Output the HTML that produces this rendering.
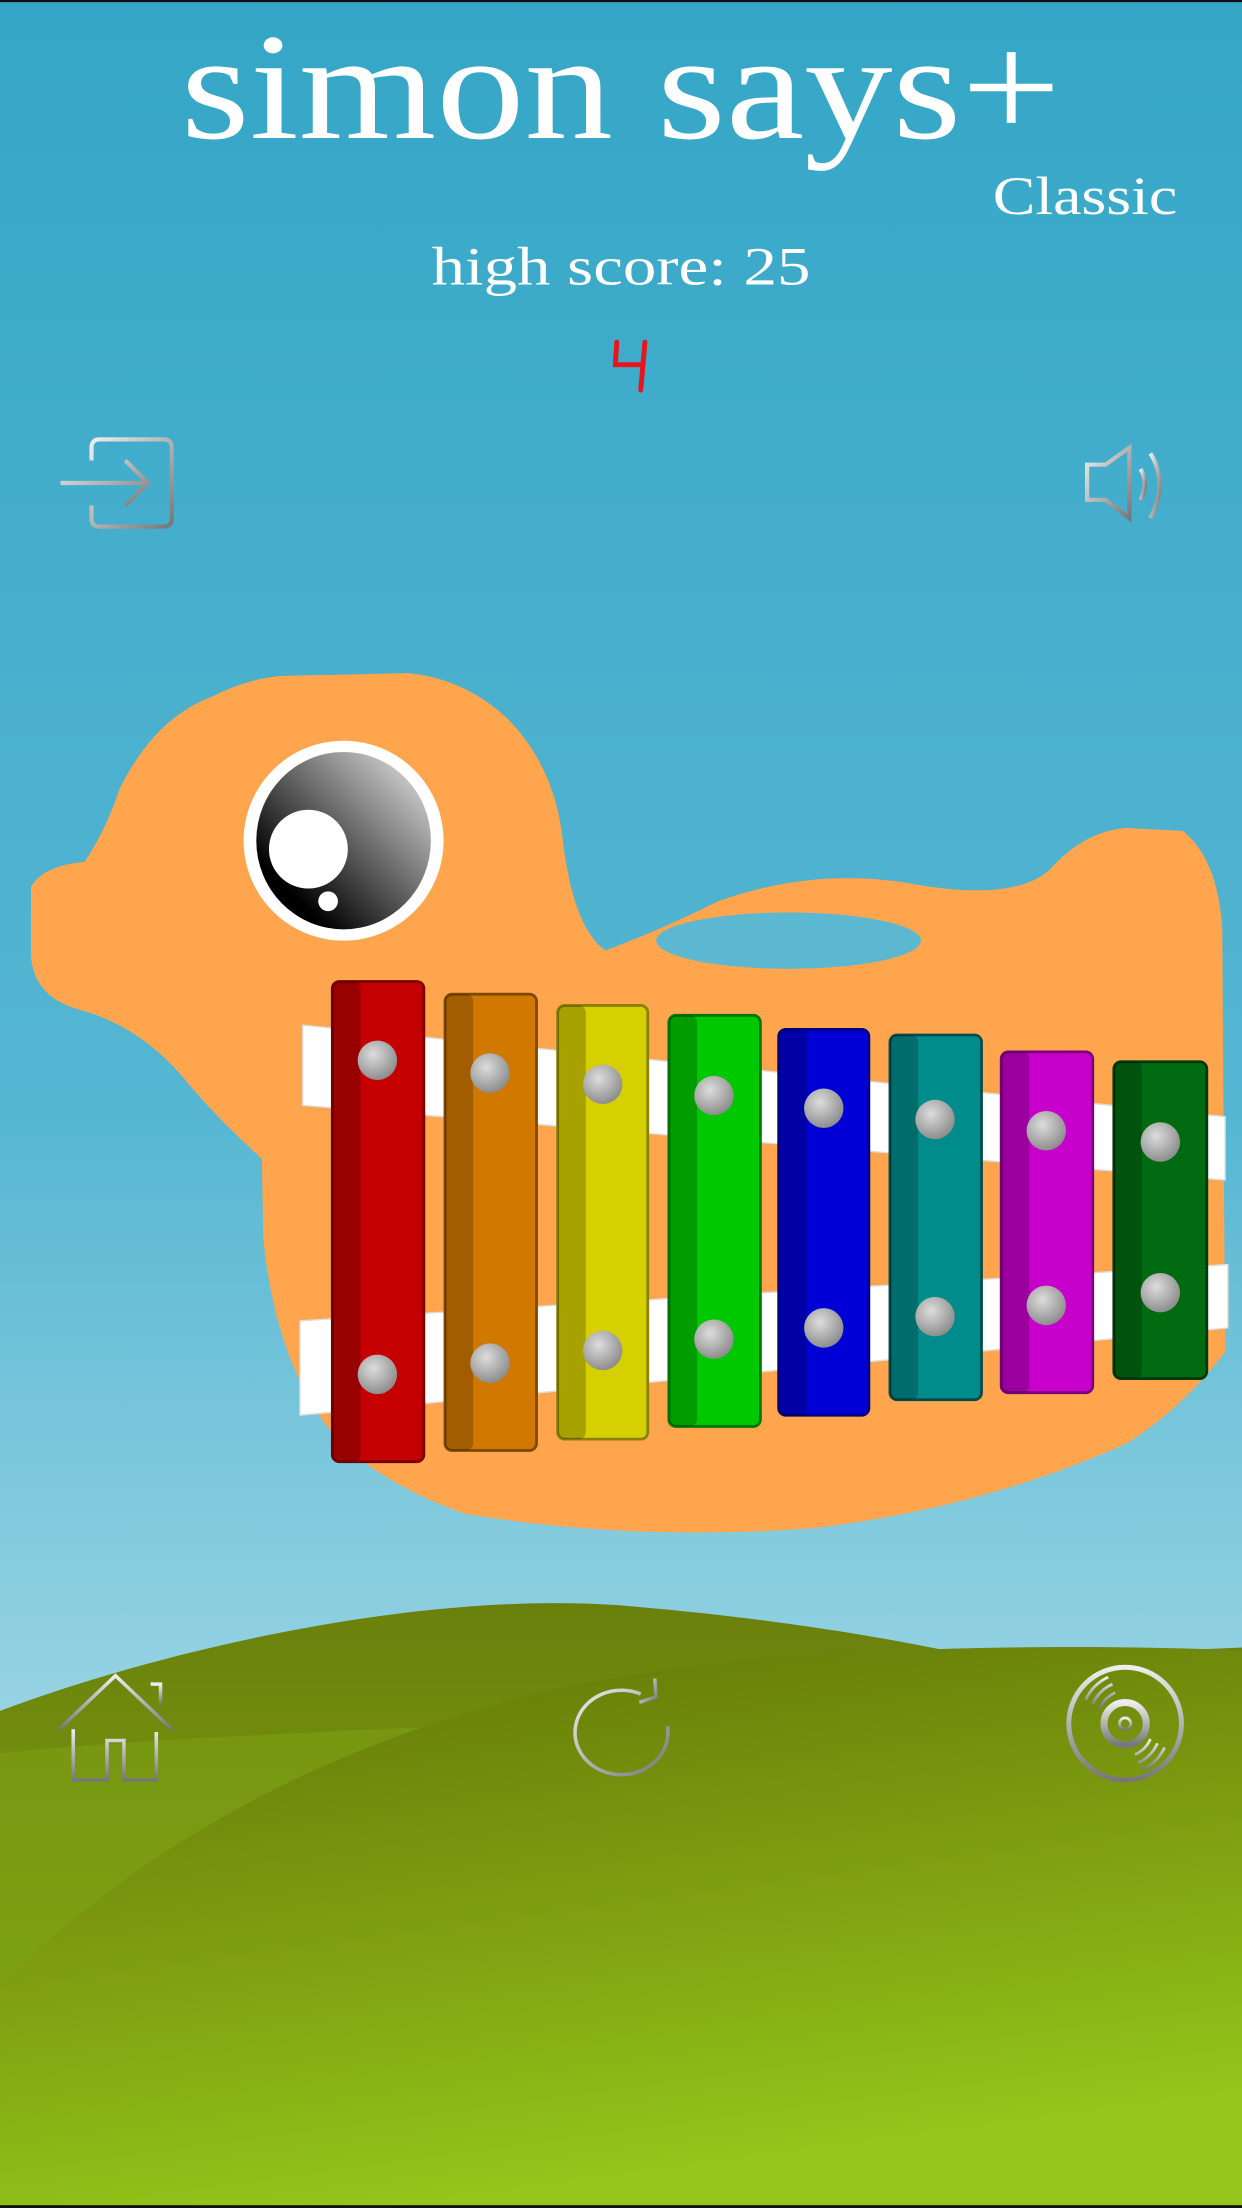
<!DOCTYPE html>
<html><head><meta charset="utf-8"><style>
html,body{margin:0;padding:0;background:#3aa9c9;}
svg{display:block;}
</style></head><body>
<svg width="1242" height="2208" viewBox="0 0 882 1568" xmlns="http://www.w3.org/2000/svg">
<defs>
<linearGradient id="sky" x1="0" y1="0" x2="0" y2="1">
<stop offset="0" stop-color="#35a6c7"/><stop offset="0.5" stop-color="#55b6d2"/><stop offset="0.8" stop-color="#9dd6e5"/>
</linearGradient>
<linearGradient id="grass" x1="0" y1="0" x2="0.3" y2="1">
<stop offset="0" stop-color="#5f7406"/><stop offset="0.5" stop-color="#7c9a10"/><stop offset="1" stop-color="#93c51a"/>
</linearGradient>
<linearGradient id="grass2" x1="0" y1="0" x2="0" y2="1">
<stop offset="0" stop-color="#6a800c"/><stop offset="1" stop-color="#88b018"/>
</linearGradient>
<linearGradient id="eye" x1="0" y1="1" x2="1" y2="0">
<stop offset="0.2" stop-color="#000"/><stop offset="1" stop-color="#eee"/>
</linearGradient>
<linearGradient id="silver" x1="0" y1="0" x2="1" y2="1">
<stop offset="0" stop-color="#eee"/><stop offset="1" stop-color="#777"/>
</linearGradient>
<linearGradient id="silver2" x1="0" y1="0" x2="0" y2="1">
<stop offset="0" stop-color="#eee"/><stop offset="1" stop-color="#777"/>
</linearGradient>
<radialGradient id="knob" cx="0.4" cy="0.35" r="0.7">
<stop offset="0" stop-color="#ddd"/><stop offset="1" stop-color="#888"/>
</radialGradient>
</defs>
<rect width="882" height="1568" fill="url(#sky)"/>
<rect width="882" height="1.5" fill="#111"/>
<path d="M0 1215 C120 1170 300 1130 440 1140 C560 1150 640 1165 700 1178 L882 1170 L882 1568 L0 1568Z" fill="url(#grass2)"/>
<path d="M0 1245 C150 1230 300 1230 480 1215 L882 1300 L882 1568 L0 1568Z" fill="#7ea414" opacity="0.5"/>
<path d="M0 1410 C120 1290 300 1200 520 1180 C650 1168 780 1168 882 1172 L882 1568 L0 1568Z" fill="url(#grass)"/>
<rect y="1566" width="882" height="2" fill="#111"/>
<text x="441" y="98" text-anchor="middle" font-family="Liberation Serif, serif" font-size="108" fill="#fff" textLength="625" lengthAdjust="spacingAndGlyphs">simon says+</text>
<text x="836" y="152" text-anchor="end" font-family="Liberation Serif, serif" font-size="38" fill="#fff" textLength="131" lengthAdjust="spacingAndGlyphs">Classic</text>
<text x="441" y="202" text-anchor="middle" font-family="Liberation Serif, serif" font-size="38" fill="#fff" textLength="269" lengthAdjust="spacingAndGlyphs">high score: 25</text>
<g stroke="#e8141e" stroke-width="3.5" fill="none" stroke-linecap="round">
<path d="M438 243 L437 259 L455 259 M458 243 L455 277"/>
</g>
<g fill="none" stroke="url(#silver)" stroke-width="3">
<path d="M65 327 V318 Q65 312 71 312 H116 Q122 312 122 318 V368 Q122 374 116 374 H71 Q65 374 65 368 V359"/>
<path d="M43 343 H105 M89 327 L105 343 L89 359"/>
</g>
<g fill="none" stroke="url(#silver)" stroke-width="3">
<path d="M772 330 H785 L802 318 V368 L785 355 H772Z"/>
<path d="M810 333 Q816 343 810 355"/>
<path d="M817 322 Q830 343 817 368"/>
</g>
<path d="M200 480 L290 478 Q330 482 360 510 Q395 545 400 600 Q408 660 430 675 Q470 660 510 640 Q580 615 650 628 Q720 640 745 618 Q770 590 800 588 L840 590 Q865 610 868 660 L870 960 Q840 1000 800 1025 Q700 1070 580 1085 Q450 1095 330 1075 Q260 1050 230 1010 Q195 960 187 880 L186 823 Q150 790 130 765 Q100 730 60 718 Q25 710 22 680 L22 630 Q30 615 60 612 Q75 590 85 560 Q110 510 150 495 Q175 482 200 480Z" fill="#ffa54d"/>
<ellipse cx="560" cy="668" rx="94" ry="20" fill="#5cb8d0"/>
<circle cx="244" cy="597" r="71" fill="#fff"/>
<ellipse cx="244" cy="597" rx="62" ry="63" fill="url(#eye)"/>
<circle cx="219" cy="603" r="28" fill="#fff"/>
<circle cx="233" cy="640" r="7" fill="#fff"/>
<path d="M215 728 L870 793 L870 838 L215 785Z" fill="#fff" stroke="#ddd"/>
<path d="M213 938 L872 898 L872 943 L213 1005Z" fill="#fff" stroke="#ddd"/>
<g>
<rect x="236" y="697" width="65" height="341" rx="5" fill="#c40000" stroke="#7a0000" stroke-width="2"/>
<rect x="316" y="706" width="65" height="324" rx="5" fill="#d07800" stroke="#7e4a00" stroke-width="2"/>
<rect x="396" y="714" width="64" height="308" rx="5" fill="#d6d000" stroke="#8a8200" stroke-width="2"/>
<rect x="475" y="721" width="65" height="292" rx="5" fill="#00c800" stroke="#007800" stroke-width="2"/>
<rect x="553" y="731" width="64" height="274" rx="5" fill="#0000d6" stroke="#000080" stroke-width="2"/>
<rect x="632" y="735" width="65" height="259" rx="5" fill="#008c8a" stroke="#004c4c" stroke-width="2"/>
<rect x="711" y="747" width="65" height="242" rx="5" fill="#c800cc" stroke="#78007a" stroke-width="2"/>
<rect x="791" y="754" width="66" height="225" rx="5" fill="#006a10" stroke="#003a0a" stroke-width="2"/>
</g>
<g fill="#000" opacity="0.22">
<rect x="236" y="697" width="20" height="341" rx="5"/><rect x="316" y="706" width="20" height="324" rx="5"/>
<rect x="396" y="714" width="20" height="308" rx="5"/><rect x="475" y="721" width="20" height="292" rx="5"/>
<rect x="553" y="731" width="20" height="274" rx="5"/><rect x="632" y="735" width="20" height="259" rx="5"/>
<rect x="711" y="747" width="20" height="242" rx="5"/><rect x="791" y="754" width="20" height="225" rx="5"/>
</g>
<g fill="url(#knob)">
<circle cx="268" cy="753" r="14"/><circle cx="268" cy="976" r="14"/>
<circle cx="348" cy="762" r="14"/><circle cx="348" cy="968" r="14"/>
<circle cx="428" cy="770" r="14"/><circle cx="428" cy="959" r="14"/>
<circle cx="507" cy="778" r="14"/><circle cx="507" cy="951" r="14"/>
<circle cx="585" cy="787" r="14"/><circle cx="585" cy="943" r="14"/>
<circle cx="664" cy="795" r="14"/><circle cx="664" cy="935" r="14"/>
<circle cx="743" cy="803" r="14"/><circle cx="743" cy="927" r="14"/>
<circle cx="824" cy="811" r="14"/><circle cx="824" cy="918" r="14"/>
</g>
<g fill="none" stroke="url(#silver2)" stroke-width="2.5">
<path d="M42 1228 L82 1190 L122 1228"/>
<path d="M107 1196 H114 V1210"/>
<path d="M52 1228 V1264 H76 V1236 H88 V1264 H111 V1230"/>
</g>
<g fill="none" stroke="url(#silver)" stroke-width="2.5">
<path d="M474 1226 A33 30 0 1 1 455 1203"/>
<path d="M465 1192 L466 1205 L454 1209"/>
</g>
<g fill="none" stroke="url(#silver2)">
<circle cx="799" cy="1224" r="40" stroke-width="3.5"/>
<circle cx="799" cy="1224" r="15" stroke-width="5"/>
<circle cx="799" cy="1224" r="4" stroke-width="2"/>
<path d="M776 1210 A28 28 0 0 1 790 1196 M781 1213 A22 22 0 0 1 792 1202 M771 1207 A33 33 0 0 1 787 1191" stroke-width="2"/>
<path d="M822 1238 A28 28 0 0 1 808 1252 M817 1235 A22 22 0 0 1 806 1246 M827 1241 A33 33 0 0 1 811 1257" stroke-width="2"/>
</g>
</svg>
</body></html>
